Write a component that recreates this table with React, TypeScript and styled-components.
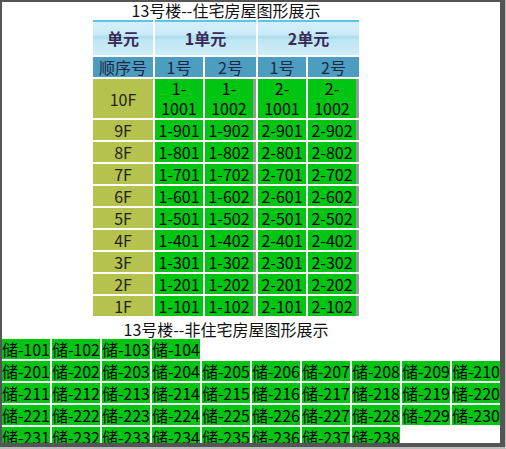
import React from "react";
import styled, { createGlobalStyle } from "styled-components";

const Global = createGlobalStyle`
  html, body { margin: 0; padding: 0; background: #bdbdbd; }
  body { font-family: "Noto Sans CJK SC", "Noto Sans", sans-serif; }
`;

const Frame = styled.div`
  box-sizing: border-box;
  width: 505px;
  height: 447px;
  border-style: solid;
  border-color: #555555;
  border-width: 2px 5px 4px 2px;
  background: #ffffff;
  overflow: hidden;
  display: flex;
  flex-direction: column;
  font-family: "Noto Sans CJK SC", "Noto Sans", sans-serif;
  color: #000;
`;

const Section = styled.div`
  width: 448px;
  display: flex;
  flex-direction: column;
  align-items: center;
`;

const Title = styled.div<{ $top?: number }>`
  font-size: 16px;
  line-height: 16px;
  height: 16px;
  white-space: nowrap;
  color: #111;
  margin-top: ${(p) => p.$top ?? 0}px;
`;

const Grid = styled.div`
  margin-top: 2px;
  display: grid;
  grid-template-columns: 60px 48px 51px 48px 51px;
  gap: 2px;
  font-size: 16px;
  line-height: 20px;
`;

const HeadCell = styled.div<{ $span?: number }>`
  grid-column: span ${(p) => p.$span ?? 1};
  box-sizing: border-box;
  height: 35px;
  border-top: 2px solid #5cc4e6;
  background: linear-gradient(
    to bottom,
    #d4f0fa 0%,
    #c8ebf7 38%,
    #a9dcee 46%,
    #bfe5f3 54%,
    #d0eef8 100%
  );
  color: #3a2a57;
  font-weight: 700;
  display: flex;
  align-items: center;
  justify-content: center;
  padding-bottom: 1px;
`;

const SubCell = styled.div`
  height: 20px;
  background: #4c9dbf;
  color: #1c2746;
  text-align: center;
`;

const FloorCell = styled.div<{ $tall?: boolean }>`
  background: #b6c24e;
  color: #222;
  display: flex;
  align-items: center;
  justify-content: center;
  height: ${(p) => (p.$tall ? 39 : 20)}px;
`;

const RoomCell = styled.div<{ $edge?: boolean; $tall?: boolean }>`
  box-sizing: border-box;
  background: #00c613;
  color: #000;
  text-align: center;
  height: ${(p) => (p.$tall ? 39 : 20)}px;
  line-height: ${(p) => (p.$tall ? 19.5 : 20)}px;
  border-right: ${(p) => (p.$edge ? "3px solid #9a9a9a" : "none")};
  white-space: nowrap;
`;

const Storage = styled.div`
  margin-top: 2px;
  display: flex;
  flex-direction: column;
  gap: 2px;
`;

const StorageRow = styled.div`
  display: flex;
  flex-wrap: wrap;
  gap: 2px;
  width: 498px;
`;

const StorageCell = styled.div`
  width: 48px;
  height: 20px;
  line-height: 20px;
  font-size: 16px;
  background: #00c613;
  color: #000;
  white-space: nowrap;
  overflow: hidden;
  letter-spacing: -0.1px;
`;

const floors = [10, 9, 8, 7, 6, 5, 4, 3, 2, 1];

function roomLabel(unit: number, floor: number, no: number) {
  return `${unit}-${floor}0${no}`;
}

export default function App() {
  const group1 = [101, 102, 103, 104];
  const group2: number[] = [];
  for (let i = 201; i <= 238; i++) group2.push(i);

  return (
    <>
      <Global />
      <Frame>
        <Section>
          <Title>13号楼--住宅房屋图形展示</Title>
          <Grid>
            <HeadCell>单元</HeadCell>
            <HeadCell $span={2}>1单元</HeadCell>
            <HeadCell $span={2}>2单元</HeadCell>
            <SubCell>顺序号</SubCell>
            <SubCell>1号</SubCell>
            <SubCell>2号</SubCell>
            <SubCell>1号</SubCell>
            <SubCell>2号</SubCell>
            {floors.map((f) => {
              const tall = f === 10;
              return (
                <React.Fragment key={f}>
                  <FloorCell $tall={tall}>{f}F</FloorCell>
                  {[1, 2].map((u) =>
                    [1, 2].map((n) => (
                      <RoomCell key={`${u}-${n}`} $tall={tall} $edge={n === 2}>
                        {tall ? (
                          <>
                            {u}-
                            <br />
                            {`${f}0${n}`}
                          </>
                        ) : (
                          roomLabel(u, f, n)
                        )}
                      </RoomCell>
                    ))
                  )}
                </React.Fragment>
              );
            })}
          </Grid>
          <Title $top={5}>13号楼--非住宅房屋图形展示</Title>
        </Section>
        <Storage>
          <StorageRow>
            {group1.map((n) => (
              <StorageCell key={n}>储-{n}</StorageCell>
            ))}
          </StorageRow>
          <StorageRow>
            {group2.map((n) => (
              <StorageCell key={n}>储-{n}</StorageCell>
            ))}
          </StorageRow>
        </Storage>
      </Frame>
    </>
  );
}
